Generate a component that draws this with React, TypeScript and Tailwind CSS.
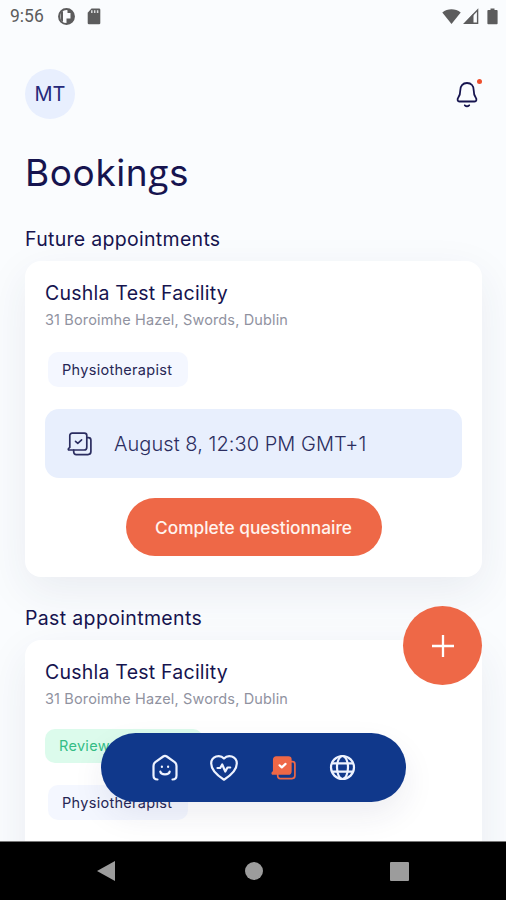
import type { ReactNode } from 'react';

function BookingIcon({ filled = false }: { filled?: boolean }) {
  return (
    <svg width="26" height="26" viewBox="0 0 26 26" fill="none" stroke="currentColor" strokeWidth="1.7" strokeLinejoin="round" strokeLinecap="round">
      <path
        d="M5.200 2.200H17.400C18.800 2.200 19.800 3.200 19.800 4.600V16.200C19.800 17.900 18.800 19 17.200 19H2.200C1.200 19 1 18 1.700 17.400L2.800 16.400V4.600C2.800 3.200 3.800 2.200 5.200 2.200Z"
        fill={filled ? 'currentColor' : 'none'}
      />
      <path d="M20.500 6.700H21.400C22.900 6.700 23.900 7.700 23.900 9.200V20.600C23.900 22.400 22.800 23.600 21 23.600H9.200C7.700 23.600 6.700 22.600 6.700 21.100V19.200" />
      <path d="M8.500 10.300L10.800 12.400L14.600 8.900" stroke={filled ? '#ffffff' : 'currentColor'} strokeWidth={filled ? 2.2 : 1.6} />
    </svg>
  );
}

function StatusBar() {
  return (
    <div className="flex h-8 shrink-0 items-center pl-[10px] pr-[8px] text-[#5c5c5d]">
      <span className="w-[48px] font-['Roboto'] text-[17.5px] leading-8">9:56</span>
      <svg width="17" height="17" viewBox="0 0 17 17">
        <circle cx="8.500" cy="8.500" r="7.500" fill="none" stroke="currentColor" strokeWidth="1.900" />
        <path d="M9.500 1A7.500 7.500 0 0 1 16 8.500C16 12 13 15.500 8.500 16V10.500H12.500V5H9.500Z" fill="currentColor" />
        <path d="M2.500 4.500L5 3V14L2.500 12Z" fill="currentColor" />
      </svg>
      <svg className="ml-[12px]" width="14" height="17" viewBox="0 0 14 17">
        <path d="M4.500 0.500H12A1.300 1.300 0 0 1 13.300 1.800V15A1.300 1.300 0 0 1 12 16.300H2A1.300 1.300 0 0 1 0.700 15V4.800Z" fill="currentColor" />
        <path d="M4.800 2.200V5M7.700 2.200V5M10.600 2.200V5" stroke="#d9dadc" strokeWidth="1.500" />
      </svg>
      <div className="ml-auto flex items-center">
        <svg width="19" height="17" viewBox="0 0 19 17">
          <path d="M9.500 16L0.300 4.500C5.500 0.300 13.500 0.300 18.700 4.500Z" fill="currentColor" />
        </svg>
        <svg className="ml-[2px]" width="16" height="17" viewBox="0 0 16 17">
          <path d="M14.600 2V15.300H1.800Z" fill="none" stroke="currentColor" strokeWidth="1.400" />
          <path d="M0.500 16L10.500 5.500V16Z" fill="currentColor" />
        </svg>
        <svg className="ml-[8px]" width="11" height="17" viewBox="0 0 11 17">
          <path d="M3.500 0.500H7.500V2H9.800C10.300 2 10.600 2.300 10.600 2.800V15.500C10.600 16 10.300 16.300 9.800 16.300H1.200C0.700 16.300 0.400 16 0.400 15.500V2.800C0.400 2.300 0.700 2 1.200 2H3.500Z" fill="currentColor" />
        </svg>
      </div>
    </div>
  );
}

function Chip({ children }: { children: ReactNode }) {
  return (
    <div className="ml-[3px] flex h-[35px] w-[140px] items-center rounded-[10px] bg-[#f4f7ff] pl-[14px] text-[14.5px] tracking-[0.3px] text-[#262655]">
      {children}
    </div>
  );
}

function Card({ className, children }: { className: string; children: ReactNode }) {
  return (
    <div className={`ml-[25px] mr-[24px] rounded-2xl bg-white px-5 pt-[18px] shadow-[0_14px_44px_rgba(40,50,90,0.08)] ${className}`}>
      <h3 className="text-[19.5px] leading-[28px] tracking-[0.23px]">Cushla Test Facility</h3>
      <p className="text-[14.5px] leading-[26px] tracking-[0.14px] text-[#90929f]">31 Boroimhe Hazel, Swords, Dublin</p>
      {children}
    </div>
  );
}

function NavBar() {
  return (
    <nav className="absolute left-[101px] top-[733px] flex h-[69px] w-[305px] items-center rounded-full bg-[#10388b] pl-[50px] text-[#eef3ff] shadow-[0_14px_32px_rgba(40,40,90,0.08)]">
      <svg width="28" height="28" viewBox="0 0 28 28" fill="none" stroke="currentColor" strokeWidth="2.200" strokeLinecap="round" strokeLinejoin="round">
        <path d="M6.500 25.500C4 25.500 2.500 24 2.500 21.500V12C2.500 10.300 3 9.200 4.300 8.200L12.200 2.500C13.300 1.700 14.700 1.700 15.800 2.500L23.700 8.200C25 9.200 25.500 10.300 25.500 12V21.500C25.500 24 24 25.500 21.500 25.500" />
        <path d="M9.300 17.500C10 21.300 18 21.300 18.700 17.500M10.900 12.500V13M17.100 12.500V13" />
      </svg>
      <svg className="ml-[31px]" width="28" height="28" viewBox="0 0 28 28" fill="none" stroke="currentColor" strokeWidth="2.200" strokeLinecap="round" strokeLinejoin="round">
        <path d="M14 25.700C11 23.800 1.200 17.200 1.200 9.500C1.200 2 10 0 14 4.500C18 0 26.800 2 26.800 9.500C26.800 17.200 17 23.800 14 25.700Z" />
        <path d="M7.500 14H10.200L12.200 10.500L15.300 17.500L17.500 13.500H20.200" />
      </svg>
      <span className="ml-[33px] text-[#ee6847]">
        <BookingIcon filled />
      </span>
      <svg className="ml-[32px]" width="27" height="27" viewBox="0 0 27 27" fill="none" stroke="currentColor" strokeWidth="2.200">
        <circle cx="13.500" cy="13.500" r="11.500" />
        <ellipse cx="13.500" cy="13.500" rx="5.500" ry="11.500" />
        <path d="M3 9.300H24M3 17.700H24" />
      </svg>
    </nav>
  );
}

export default function App() {
  return (
    <div className="relative flex h-[900px] w-[506px] flex-col overflow-hidden bg-[#fafcfe] font-['Inter',sans-serif] text-[#16144f]">
      <StatusBar />

      <header className="mt-[37px] flex h-[50px] shrink-0 items-center justify-between pl-[25px] pr-[22px]">
        <div className="flex size-[50px] items-center justify-center rounded-full bg-[#e8effe] text-[20px] text-[#26297a]">MT</div>
        <div className="relative">
          <svg width="34" height="34" viewBox="0 0 34 34" fill="none" stroke="currentColor" strokeWidth="1.800" strokeLinejoin="round" strokeLinecap="round">
            <path d="M17 6C12.600 6 10.300 9.200 10.300 13.200C10.300 17.500 9.600 18.700 8.300 20.500C7 22.300 7.500 24.500 9.500 24.500H24.500C26.500 24.500 27 22.300 25.700 20.500C24.400 18.700 23.700 17.500 23.700 13.200C23.700 9.200 21.400 6 17 6Z" />
            <path d="M14.800 28.300Q17 30.300 19.200 28.300" />
          </svg>
          <span className="absolute left-[27px] top-[2px] size-[5px] rounded-full bg-[#ee4f2d]" />
        </div>
      </header>

      <h1 className="mt-[28px] h-[50px] shrink-0 pl-[25px] text-[37px] font-normal leading-[50px] tracking-[0.6px]">
        Bookin<span className="font-['Open_Sans']">g</span>s
      </h1>

      <h2 className="mt-[28px] shrink-0 pl-[25px] text-[19.5px] leading-[28px] tracking-[0.3px]">Future appointments</h2>
      <Card className="mt-[8px] h-[316px] shrink-0">
        <div className="mt-[19px]">
          <Chip>Physiotherapist</Chip>
        </div>
        <div className="mt-[22px] flex h-[69px] items-center rounded-[14px] bg-[#e8effd] pl-[22px] text-[#2b2d60]">
          <BookingIcon />
          <span className="ml-[21px] text-[20px] font-light tracking-[0.05px]">August 8, 12:30 PM GMT+1</span>
        </div>
        <button className="mx-auto mt-[20px] flex h-[58px] w-[256px] items-center justify-center rounded-full bg-[#ee6847] pt-px text-[17.3px] font-medium text-[#fff3ee]">
          Complete questionnaire
        </button>
      </Card>

      <h2 className="mt-[27px] shrink-0 pl-[25px] text-[19.5px] leading-[28px] tracking-[0.35px]">Past appointments</h2>
      <Card className="mt-[8px] h-[316px] shrink-0">
        <div className="mt-[17px] flex h-[34px] w-[158px] items-center rounded-[10px] bg-[#dcfbec] pl-[14px] text-[14.5px] tracking-[0.3px] text-[#35bd86]">
          Review
        </div>
        <div className="mt-[22px]">
          <Chip>Physiotherapist</Chip>
        </div>
      </Card>

      <button className="absolute left-[403px] top-[606px] flex size-[79px] items-center justify-center rounded-full bg-[#ee6847]">
        <svg width="22" height="22" viewBox="0 0 22 22" stroke="#ffffff" strokeWidth="2.300">
          <path d="M11 0V22M0 11H22" />
        </svg>
      </button>

      <NavBar />

      {/* Android system buttons */}
      <div className="absolute inset-x-0 bottom-0 flex h-[59px] items-center border-t border-[#777] bg-black pl-[97px] text-[#9c9c9c]">
        <svg width="18" height="20" viewBox="0 0 18 20">
          <path d="M18 0V20L0 10Z" fill="currentColor" />
        </svg>
        <span className="ml-[130px] size-[18px] rounded-full bg-current" />
        <span className="ml-[127px] size-[19px] rounded-[1px] bg-current" />
      </div>
    </div>
  );
}
